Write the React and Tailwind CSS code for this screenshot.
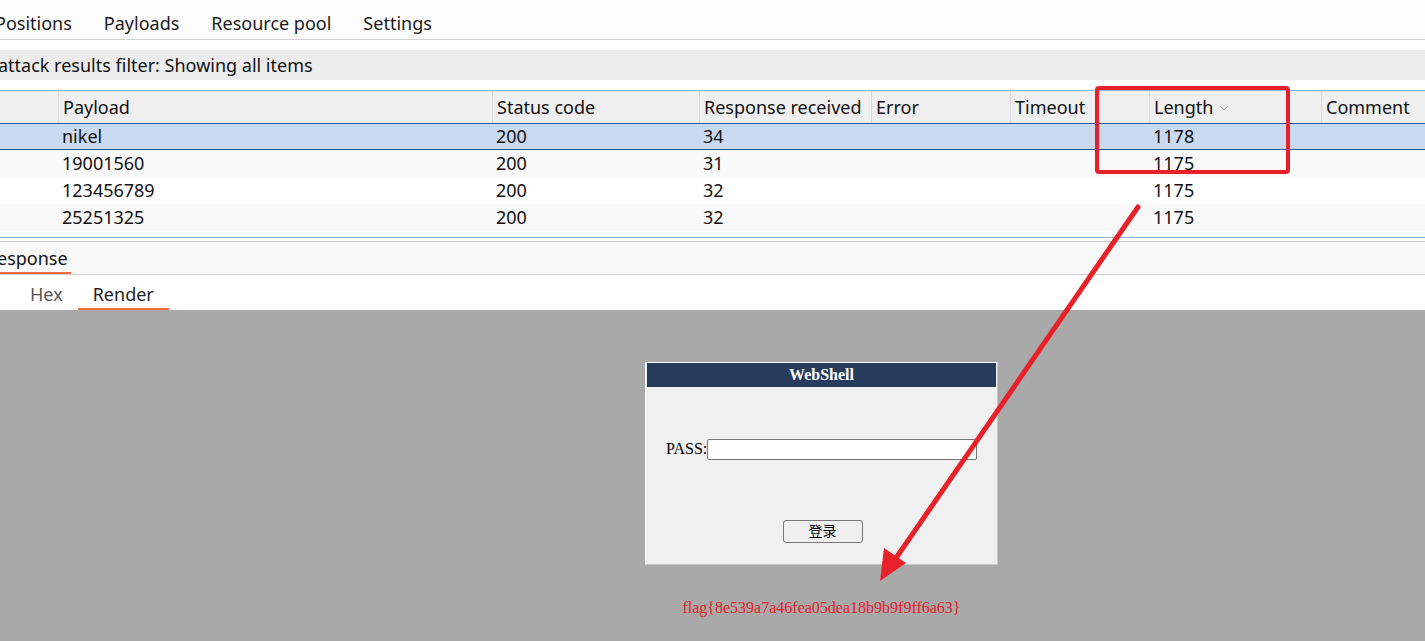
import React from 'react';

const ui = { fontFamily: '"Noto Sans", "Liberation Sans", sans-serif' };
const serif = { fontFamily: '"Liberation Serif", "Noto Sans CJK SC", serif' };

const columns = [
  { label: '', w: 'w-[58px]' },
  { label: 'Payload', w: 'w-[434px]' },
  { label: 'Status code', w: 'w-[207px]' },
  { label: 'Response received', w: 'w-[172px]' },
  { label: 'Error', w: 'w-[139px]' },
  { label: 'Timeout', w: 'w-[139px]' },
  { label: 'Length', w: 'w-[172px]', sorted: true },
  { label: 'Comment', w: 'flex-1' },
];

const rows = [
  ['', 'nikel', '200', '34', '', '', '1178', ''],
  ['', '19001560', '200', '31', '', '', '1175', ''],
  ['', '123456789', '200', '32', '', '', '1175', ''],
  ['', '25251325', '200', '32', '', '', '1175', ''],
  ['', '100700', '200', '32', '', '', '1175', ''],
];

function TopTabs() {
  return (
    <div className="h-[40px] bg-[#fcfcfc] border-b border-[#d2d2d2] flex items-center pt-[7px] gap-[32px] ml-[-5px] text-[18px] text-[#1a1a1a]">
      <span>Positions</span>
      <span>Payloads</span>
      <span>Resource pool</span>
      <span>Settings</span>
    </div>
  );
}

function ResultsTable() {
  return (
    <div className="border-t border-[#8db4de]">
      <div className="h-[32px] bg-[#efefef] flex">
        {columns.map((c, i) => (
          <div
            key={i}
            className={`${c.w} h-full flex items-center pl-[4px] text-[18px] text-[#111] ${i > 0 ? 'border-l border-[#d9d9d9]' : ''}`}
          >
            {c.label}
            {c.sorted && (
              <svg width="10" height="6" viewBox="0 0 10 6" className="ml-[6px] mt-[2px]">
                <path d="M1 1 L5 5 L9 1" fill="none" stroke="#b0b0b0" strokeWidth="1" />
              </svg>
            )}
          </div>
        ))}
      </div>
      <div className="h-[114px] overflow-hidden">
        {rows.map((r, ri) => (
          <div
            key={ri}
            className={`h-[27px] flex ${
              ri === 0
                ? 'bg-[#c9daf0] border-y border-[#2c5b8d]'
                : ri % 2 === 1
                ? 'bg-[#f9f9f9]'
                : 'bg-white'
            }`}
          >
            {r.map((v, ci) => (
              <div key={ci} className={`${columns[ci].w} pl-[4px] flex items-center pb-[2px] text-[18px] text-[#111] leading-none`}>
                {v}
              </div>
            ))}
          </div>
        ))}
      </div>
      <div className="border-t border-[#8db4de] h-[4px] bg-white" />
    </div>
  );
}

function LoginBox() {
  return (
    <div className="ml-[645px] w-[353px] pt-[52px]">
      <div className="h-[203px] border border-white border-r-[#c8c8c8] border-b-[#c8c8c8] bg-[#f0f0f0] p-[1px] pt-0">
        <div className="h-[24px] bg-[#283d5e] flex items-center justify-center text-white font-bold text-[16px]" style={serif}>
          WebShell
        </div>
        <div className="flex items-center pl-[19px] pt-[50px] text-[16px] text-black" style={serif}>
          <span>PASS:</span>
          <div className="w-[270px] h-[21px] bg-white border border-[#767676] rounded-[2px]" />
        </div>
        <div className="flex justify-center pt-[59px] pl-[2px]">
          <div className="w-[80px] h-[23px] border border-[#767676] rounded-[3px] bg-[#efefef] flex items-center justify-center text-[14px] text-black" style={serif}>
            登录
          </div>
        </div>
      </div>
      <div className="text-center mt-[31px] text-[16px] text-[#e8202a]" style={serif}>
        flag{'{'}8e539a7a46fea05dea18b9b9f9ff6a63{'}'}
      </div>
    </div>
  );
}

export default function App() {
  return (
    <div className="relative w-[1425px] h-[641px] overflow-hidden bg-white" style={ui}>
      <TopTabs />
      <div className="h-[10px]" />
      <div className="h-[30px] bg-[#ececec] flex items-center ml-[-2px] text-[18px] text-[#111]">
        attack results filter: Showing all items
      </div>
      <div className="h-[10px]" />
      <ResultsTable />

      <div className="border-t border-[#c6c6c6] h-[34px] bg-[#f9f9f9] border-b border-b-[#cfcfcf] flex">
        <div className="relative ml-[-3px] pr-[3px] flex items-center pt-[3px] text-[18px] text-[#111]">
          <span className="pb-[2px]">esponse</span>
          <div className="absolute left-0 right-0 bottom-0 h-[2px] bg-[#f26a3d]" />
        </div>
      </div>
      <div className="h-[35px] bg-white flex items-center pt-[4px] text-[18px]">
        <span className="ml-[30px] text-[#555]">Hex</span>
        <div className="relative ml-[15px] h-full flex items-center px-[15px] text-[#222]">
          <span>Render</span>
          <div className="absolute left-0 right-0 bottom-0 h-[2px] bg-[#f26a3d]" />
        </div>
      </div>
      <div className="h-[331px] bg-[#a9a9a9]">
        <LoginBox />
      </div>

      <svg className="absolute inset-0 pointer-events-none" width="1425" height="641" viewBox="0 0 1425 641">
        <rect x="1097" y="88" width="191" height="84" rx="2" fill="none" stroke="#e8202a" strokeWidth="4" />
        <line x1="1138" y1="207" x2="896" y2="558" stroke="#e8202a" strokeWidth="5" strokeLinecap="round" />
        <polygon points="880,581 884,548 906,563" fill="#e8202a" />
      </svg>
    </div>
  );
}
